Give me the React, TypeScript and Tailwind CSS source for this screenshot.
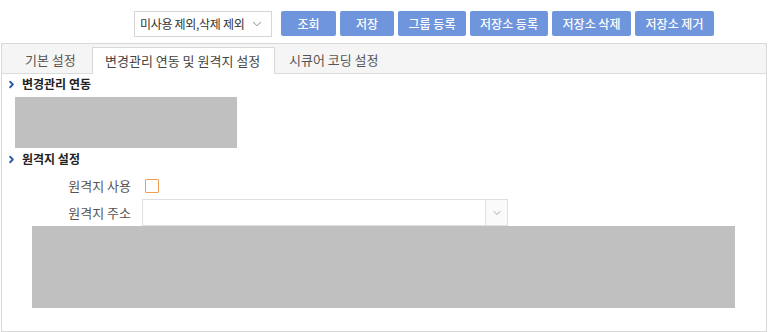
import { ChevronDown, ChevronRight } from 'lucide-react';

const buttons = [
  { label: '조회', w: 'w-[55px]' },
  { label: '저장', w: 'w-[54px]' },
  { label: '그룹 등록', w: 'w-[68px]' },
  { label: '저장소 등록', w: 'w-[78px]' },
  { label: '저장소 삭제', w: 'w-[79px]' },
  { label: '저장소 제거', w: 'w-[79px]' },
];

function SectionTitle({ text }: { text: string }) {
  return (
    <div className="flex items-center h-[20px] pl-[4px] gap-[5px]">
      <ChevronRight size={11} strokeWidth={4} className="text-[#2c5aa8]" />
      <span className="text-[12px] font-bold text-[#222]">{text}</span>
    </div>
  );
}

export default function App() {
  return (
    <div className="w-[773px] h-[332px] bg-white overflow-hidden font-['Noto_Sans_CJK_KR','Noto_Sans',sans-serif] text-[12px] text-[#333]">
      {/* toolbar */}
      <div className="h-[43px] flex items-start pt-[11px] pl-[134px]">
        <div className="w-[138px] h-[26px] border border-[#d6d6d6] flex items-center justify-between pl-[5px] pr-[7px] bg-white">
          <span className="text-[12px] text-[#333] tracking-[-0.3px]">미사용 제외,삭제 제외</span>
          <ChevronDown size={14} strokeWidth={1.5} className="text-[#777]" />
        </div>
        <div className="flex gap-[4px] ml-[9px]">
          {buttons.map((b) => (
            <button
              key={b.label}
              className={`${b.w} h-[25px] rounded-[2px] bg-[#6f95dc] text-white text-[12px] font-medium flex items-center justify-center`}
            >
              {b.label}
            </button>
          ))}
        </div>
      </div>

      {/* panel */}
      <div className="ml-[1px] w-[766px] h-[289px] border border-[#d8d8d8] flex flex-col">
        <div className="h-[30px] bg-[#f5f5f5] border-b border-[#dcdcdc] flex items-end pl-[2px] text-[13px]">
          <div className="w-[88px] h-[26px] flex items-center pl-[21px] text-[#555]">기본 설정</div>
          <div className="w-[183px] h-[27px] -mb-px bg-white border border-b-0 border-[#d8d8d8] flex items-center pl-[12px] text-[#444]">
            변경관리 연동 및 원격지 설정
          </div>
          <div className="h-[26px] flex items-center pl-[14px] text-[#555]">시큐어 코딩 설정</div>
        </div>

        <div className="flex flex-col">
          <SectionTitle text="변경관리 연동" />
          <div className="ml-[13px] mt-[3px] w-[222px] h-[51px] bg-[#c0c0c0]" />
          <div className="mt-[1px]">
            <SectionTitle text="원격지 설정" />
          </div>

          <div className="flex items-center h-[27px] mt-[3px] text-[13px]">
            <span className="w-[129px] text-right text-[#555]">원격지 사용</span>
            <div className="ml-[14px] w-[14px] h-[14px] border-[1.5px] border-solid border-[#f0a050] bg-white rounded-[1px]" />
          </div>
          <div className="flex items-center h-[27px] text-[13px]">
            <span className="w-[129px] text-right text-[#555]">원격지 주소</span>
            <div className="ml-[11px] w-[366px] h-[27px] border border-[#e0e0e0] flex justify-end">
              <div className="w-[22px] h-full border-l border-[#e0e0e0] bg-[#fafafa] flex items-center justify-center">
                <ChevronDown size={12} strokeWidth={1.5} className="text-[#888]" />
              </div>
            </div>
          </div>
          <div className="ml-[30px] w-[703px] h-[82px] bg-[#c0c0c0]" />
        </div>
      </div>
    </div>
  );
}
